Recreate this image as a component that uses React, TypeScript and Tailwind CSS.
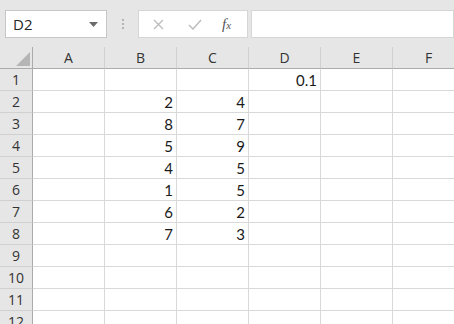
import React from "react";

const cols = ["A", "B", "C", "D", "E", "F"];
const data: Record<number, Record<string, string>> = {
  1: { D: "0.1" },
  2: { B: "2", C: "4" },
  3: { B: "8", C: "7" },
  4: { B: "5", C: "9" },
  5: { B: "4", C: "5" },
  6: { B: "1", C: "5" },
  7: { B: "6", C: "2" },
  8: { B: "7", C: "3" },
};
const rows = Array.from({ length: 12 }, (_, i) => i + 1);

export default function App() {
  return (
    <div className="w-[454px] h-[324px] overflow-hidden bg-[#e6e6e6] relative" style={{ fontFamily: "'Open Sans', sans-serif" }}>
      {/* toolbar */}
      <div className="flex items-start h-[47px] pt-[10px] pl-[5px]">
        <div className="w-[102px] h-[28px] bg-white border border-[#c6c6c6] flex items-center pl-[7px] pr-[8px] justify-between">
          <span className="text-[15px] text-[#262626] leading-none">D2</span>
          <svg width="9" height="5" viewBox="0 0 9 5"><path d="M0 0h9L4.5 5z" fill="#6b6b6b" /></svg>
        </div>
        <div className="w-[31px] h-[28px] flex flex-col items-center justify-center gap-[2px]">
          <div className="w-[2px] h-[2px] bg-[#b4b4b4]" />
          <div className="w-[2px] h-[2px] bg-[#b4b4b4]" />
          <div className="w-[2px] h-[2px] bg-[#b4b4b4]" />
        </div>
        <div className="w-[110px] h-[28px] bg-white border border-[#d6d6d6] flex items-center">
          <svg className="ml-[14px]" width="11" height="11" viewBox="0 0 11 11"><path d="M1 1l9 9M10 1l-9 9" stroke="#bdbdbd" strokeWidth="1.4" /></svg>
          <svg className="ml-[24px]" width="14" height="11" viewBox="0 0 14 11"><path d="M1 6l4 4L13 1" stroke="#bdbdbd" strokeWidth="1.5" fill="none" /></svg>
          <span className="ml-[20px] text-[15px] italic text-[#555] leading-none" style={{ fontFamily: "'Liberation Serif', serif" }}>f<span className="text-[11px]">x</span></span>
        </div>
        <div className="ml-[3px] flex-1 h-[28px] bg-white border border-[#d6d6d6]" />
      </div>
      {/* grid */}
      <div className="grid grid-cols-[33px_repeat(6,72px)] grid-rows-[22px_repeat(12,22px)] bg-white">
        <div className="bg-[#e6e6e6] border-r border-b border-[#ababab] relative">
          <svg className="absolute left-[16px] top-[5px]" width="14" height="14" viewBox="0 0 14 14"><path d="M14 0V14H0z" fill="#b5b5b5" /></svg>
        </div>
        {cols.map((c) => (
          <div key={c} className="bg-[#e6e6e6] border-b border-b-[#ababab] border-r border-r-[#d0d0d0] flex items-center justify-center text-[14px] text-[#333]">
            {c}
          </div>
        ))}
        {rows.map((r) => (
          <React.Fragment key={r}>
            <div className="bg-[#e6e6e6] border-r border-r-[#ababab] border-b border-b-[#d0d0d0] flex items-center justify-center text-[14px] text-[#333]">
              {r}
            </div>
            {cols.map((c) => (
              <div key={c} className="border-r border-b border-[#d9d9d9] flex items-center justify-end pr-[3px] text-[15px] text-[#1a1a1a] leading-none pt-[2px]" style={{ fontFamily: "Lato, 'Liberation Sans', sans-serif" }}>
                {data[r]?.[c] ?? ""}
              </div>
            ))}
          </React.Fragment>
        ))}
      </div>
    </div>
  );
}
